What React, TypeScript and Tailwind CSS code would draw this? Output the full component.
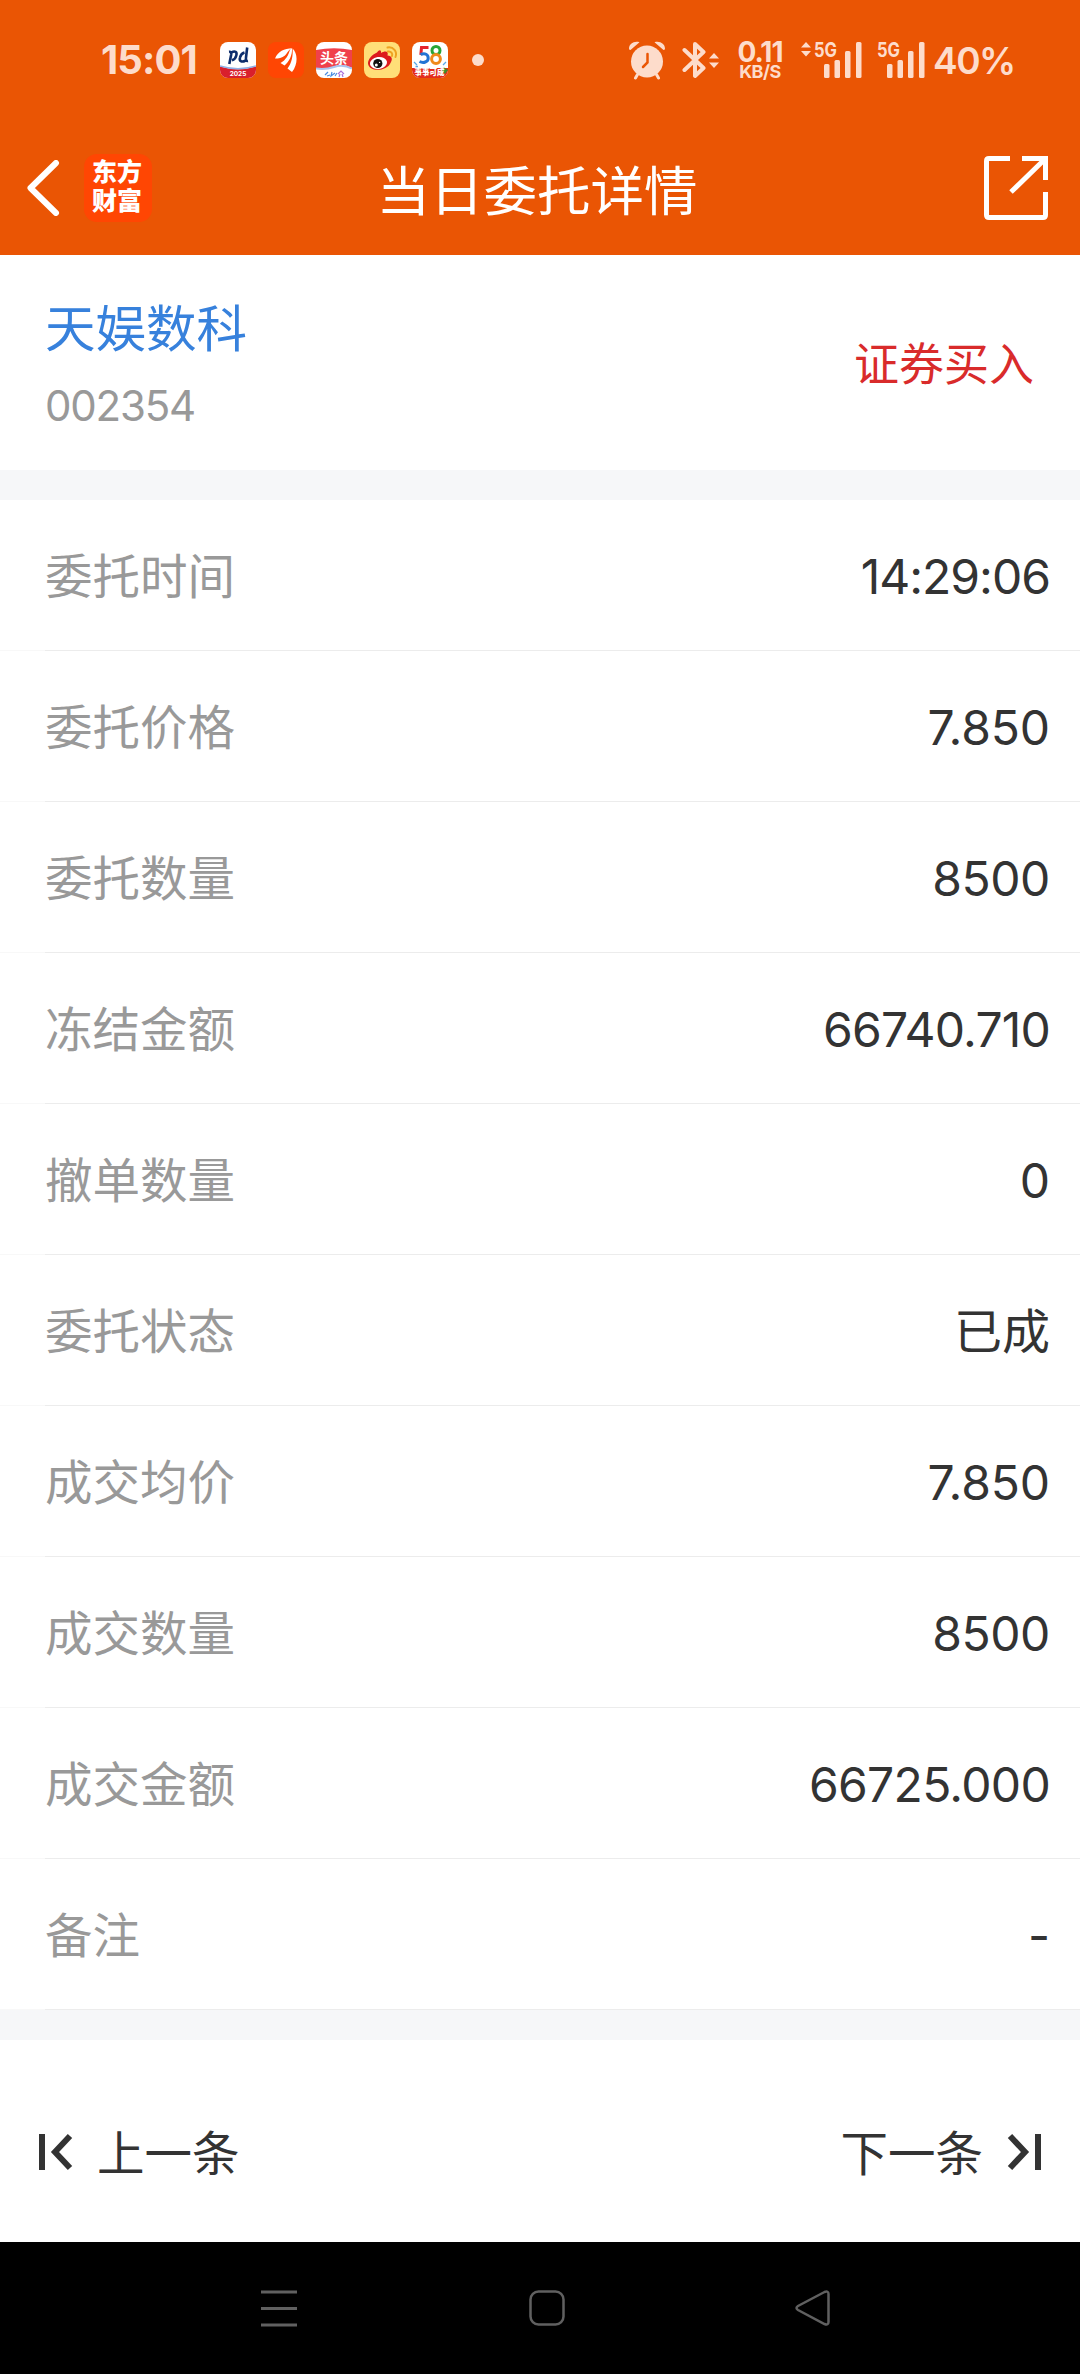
import React from 'react';

const rows = [
    { label: '委托时间', value: '14:29:06', cls: 'tracking-[-1px]' },
    { label: '委托价格', value: '7.850', cls: 'tracking-[-0.1px]' },
    { label: '委托数量', value: '8500', cls: 'tracking-[-0.4px]' },
    { label: '冻结金额', value: '66740.710', cls: 'tracking-[-0.8px]' },
    { label: '撤单数量', value: '0', cls: '' },
    { label: '委托状态', value: '已成', cls: 'text-[46.500px]' },
    { label: '成交均价', value: '7.850', cls: 'tracking-[-0.1px]' },
    { label: '成交数量', value: '8500', cls: 'tracking-[-0.4px]' },
    { label: '成交金额', value: '66725.000', cls: 'tracking-[-0.7px]' },
    { label: '备注', value: '-', cls: 'text-[42px]' },
];

const PufaIcon = () => (
    <svg className="ml-[26px] shrink-0" width="36" height="36" viewBox="0 0 36 36">
        <rect width="36" height="36" rx="8" fill="#fff" />
        <path d="M0 24.500Q18 30 36 24.500V28a8 8 0 0 1-8 8H8a8 8 0 0 1-8-8Z" fill="#d91f2c" />
        <path d="M0 24Q18 29.500 36 24" fill="none" stroke="#8fb0e6" strokeWidth="1.400" />
        <path d="M9.300 22L11.200 12.500Q11.500 9.500 9 9.800M11.500 10.500C15 8.500 17.300 10 16.300 13.500Q15.300 17.500 12 18.300M27.200 5.500L26 15.500Q25.500 19.500 28 19M25.500 18.500C21.500 20.800 19 19 20 15.500Q21 11.500 24.500 10.500" fill="none" stroke="#0d2d6c" strokeWidth="2.600" />
        <text x="18" y="33.500" textAnchor="middle" fontSize="6.500" fontWeight="700" fontFamily="Inter, sans-serif" fill="#fff">2025</text>
    </svg>
);

const EastmoneyIcon = () => (
    <svg className="ml-[12px] shrink-0" width="36" height="36" viewBox="0 0 36 36">
        <rect width="36" height="36" rx="8" fill="#ff4603" />
        <path d="M7 16.500C10 9.500 16 6.500 24.500 6.300C20 8 20.500 10 17 13.500C14 16 10.500 16.500 7 16.500Z" fill="#fff" />
        <path d="M12.500 21C18 18 20.500 13 22 7.500L24 6.500C24.500 13 21 20 16.500 23.500Z" fill="#fff" />
        <path d="M19.500 26.500C24 20.500 25 14 24.600 6.500C29.500 11 30.500 22 24 30Z" fill="#fff" />
    </svg>
);

const ToutiaoIcon = () => (
    <svg className="ml-[12px] shrink-0" width="36" height="36" viewBox="0 0 36 36">
        <rect width="36" height="36" rx="8" fill="#fff" />
        <path d="M0 8Q18 4.500 36 8V26Q27 21 18 24.500T0 26Z" fill="#f0414b" />
        <path d="M0 26.500Q9 28 18 25T36 26.500" fill="none" stroke="#a9c4ee" strokeWidth="2" />
        <text x="18" y="21" textAnchor="middle" fontSize="14" fontWeight="700" fontFamily="'Noto Sans CJK SC', sans-serif" fill="#fff">头条</text>
        <path d="M9 33l3-3m-1 4 3-1m2-3-1 4 4-3m0 3 2-3" fill="none" stroke="#4a8ce0" strokeWidth="1.200" />
        <path d="M22 32l3-3 3 3m-4 0-1 3m3-3 1 3" fill="none" stroke="#ab72d8" strokeWidth="1.200" />
    </svg>
);

const WeiboIcon = () => (
    <svg className="ml-[12px] shrink-0" width="36" height="36" viewBox="0 0 36 36">
        <rect width="36" height="36" rx="8" fill="#ffdf78" />
        <path d="M13 10.500C15.500 7 17.500 8 17 11C21 8.500 25 9 23.500 13.500C28 14 29 17 26.500 21C23 29.500 5 30.500 4 21.500C3.800 17.500 8 12.500 13 10.500Z" fill="#dd1a1e" />
        <ellipse cx="14.500" cy="21" rx="8.600" ry="6" fill="#fff" transform="rotate(-8 14.500 21)" />
        <circle cx="13.800" cy="21.500" r="4.600" fill="#111" />
        <circle cx="12.300" cy="23" r="1.500" fill="#fff" />
        <circle cx="15.600" cy="20.400" r=".7" fill="#fff" />
        <path d="M23.500 5.500C29.500 4.500 33.500 9.500 31.500 15M24 9.500C27 9 29 11.500 28 14" fill="none" stroke="#eea321" strokeWidth="2" strokeLinecap="round" />
    </svg>
);

const TongchengIcon = () => (
    <svg className="ml-[12px] shrink-0" width="36" height="36" viewBox="0 0 36 36">
        <rect width="36" height="36" rx="8" fill="#fff" />
        <path d="M0 26h36V28a8 8 0 0 1-8 8H8a8 8 0 0 1-8-8Z" fill="#e32d1c" />
        <path d="M16.500 5.500H9.500L8.800 13" fill="none" stroke="#e4232b" strokeWidth="3" />
        <path d="M8.500 12.500C13 10.500 16.200 12.500 16.200 16.200S11.500 21.500 7.500 19.500" fill="none" stroke="#2274d4" strokeWidth="3" />
        <circle cx="24" cy="8.500" r="4" fill="none" stroke="#29a538" strokeWidth="3" />
        <circle cx="24" cy="17" r="4.400" fill="none" stroke="#f08a1b" strokeWidth="3" />
        <path d="M2 20l3 3M3.500 24.500h2.500M34 20l-3 3" stroke="#5aa9e8" strokeWidth="1.300" />
        <path d="M29 28l3-2.500 4 2.500-3 4Z" fill="#3d8e2b" />
        <text x="17.500" y="33.300" textAnchor="middle" fontSize="7.500" fontWeight="900" fontFamily="'Noto Sans CJK SC', sans-serif" fill="#fff">事事可成</text>
    </svg>
);

const AlarmIcon = () => (
    <svg className="shrink-0" width="38" height="40" viewBox="0 0 38 40" fill="#fddccb">
        <path d="M1 8.500C1 4 6 .5 11.500 2.200L2.500 10Q1 10 1 8.500ZM37 8.500C37 4 32 .5 26.500 2.200L35.500 10Q37 10 37 8.500Z" />
        <circle cx="19" cy="21.500" r="16" />
        <path d="M9.500 34.500L7.500 38M28.500 34.500L30.500 38" stroke="#fddccb" strokeWidth="3" strokeLinecap="round" />
        <path d="M19.500 14v8.500L15 27" fill="none" stroke="#ea5504" strokeWidth="2.500" strokeLinecap="round" />
    </svg>
);

const BluetoothIcon = () => (
    <svg className="ml-[16px] shrink-0" width="38" height="40" viewBox="0 0 38 40">
        <path d="M2.500 10L21.500 28 13 36V4L21.500 12 2.500 30" fill="none" stroke="#fddccb" strokeWidth="4" strokeLinejoin="round" strokeLinecap="round" />
        <path d="M27 18.500L32 13l5 5.500ZM27 22.500L32 28l5-5.500Z" fill="#fddccb" />
    </svg>
);

// 5G label over four rising bars
const Signal = ({ arrows }: { arrows?: boolean }) => (
    <svg className={arrows ? 'ml-[16px] shrink-0 overflow-visible' : 'ml-[15px] shrink-0 overflow-visible'} width={arrows ? 62 : 48} height="38" viewBox={arrows ? '-14 0 62 38' : '0 0 48 38'} fill="#fddccb">
        {arrows && <path d="M-13 6.500L-8 1l5 5.500ZM-13 10L-8 15.500l5-5.500Z" />}
        <text x="0" y="16" fontSize="20" fontWeight="700" fontFamily="Inter, sans-serif" textLength="23" lengthAdjust="spacingAndGlyphs">5G</text>
        <rect x="10" y="23" width="5.500" height="14" rx="1.500" />
        <rect x="20.500" y="19" width="5.500" height="18" rx="1.500" />
        <rect x="31" y="10" width="5.500" height="27" rx="1.500" />
        <rect x="42" y="1" width="5.500" height="36" rx="1.500" />
    </svg>
);

export default function App() {
    return (
        <div className="flex h-[2374px] w-[1080px] flex-col overflow-hidden bg-white font-['Inter','Noto_Sans_CJK_SC',sans-serif] text-[#333333]">
            <div className="h-[255px] bg-[#ea5504]">
                {/* Status bar */}
                <div className="flex h-[120px] items-center pl-[101px] text-[#fddccb]">
                    <span className="w-[93px] text-[40px] leading-none font-bold tracking-[-0.9px] whitespace-nowrap">15:01</span>
                    <PufaIcon />
                    <EastmoneyIcon />
                    <ToutiaoIcon />
                    <WeiboIcon />
                    <TongchengIcon />
                    <span className="ml-[24px] size-3 rounded-full bg-[#fddccb]" />
                    <div className="ml-[144px] flex items-center">
                        <AlarmIcon />
                        <BluetoothIcon />
                        <div className="ml-[16px] flex w-[48px] flex-col items-center whitespace-nowrap">
                            <span className="text-[28px] leading-[22px] font-bold tracking-[-1px]">0.11</span>
                            <span className="text-[18px] leading-[17px] font-bold tracking-[-0.5px]">KB/S</span>
                        </div>
                        <Signal arrows />
                        <Signal />
                        <span className="ml-[8px] text-[37px] leading-none font-semibold tracking-[-1.5px]">40%</span>
                    </div>
                </div>

                {/* Header */}
                <div className="flex h-[135px] items-center justify-between pr-[32px] pl-[26px] text-white">
                    <div className="flex w-[126px] items-center justify-between">
                        <svg width="34" height="56" viewBox="0 0 34 56" fill="none">
                            <path d="M30 3L4.500 28L30 53" stroke="#fff" strokeWidth="6" strokeLinecap="round" strokeLinejoin="round" />
                        </svg>
                        <div className="flex size-[68px] flex-col items-center rounded-[13px] bg-[#ff4603] pt-[2px] pr-[2px] font-['Noto_Sans_CJK_SC',sans-serif] text-[25px] leading-[29px] font-black">
                            <span>东方</span>
                            <span>财富</span>
                        </div>
                    </div>
                    <h1 className="mt-[8px] ml-[-62px] text-[53.500px] leading-none">当日委托详情</h1>
                    <svg width="64" height="64" viewBox="0 0 64 64" fill="none" stroke="#fff" strokeWidth="5">
                        <path d="M26 2.500H5Q2.500 2.500 2.500 5V59Q2.500 61.500 5 61.500H59Q61.500 61.500 61.500 59V36M38 2.500H61.500V24M60 4L27 36" />
                    </svg>
                </div>
            </div>

            {/* Stock */}
            <div className="flex h-[215px] items-center justify-between pt-[4px] pr-[46px] pl-[45px]">
                <div className="flex flex-col">
                    <span className="text-[50.500px] leading-[60px] text-[#3781dc]">天娱数科</span>
                    <span className="mt-[22px] text-[42px] leading-[50px] tracking-[-1.2px] text-[#999999]">002354</span>
                </div>
                <span className="text-[45px] leading-none text-[#d92b2b]">证券买入</span>
            </div>
            <div className="h-[30px] bg-[#f6f7f9]" />

            {/* Order fields */}
            <div className="flex flex-col">
                {rows.map(({ label, value, cls }) => (
                    <div key={label} className="flex h-[151px] flex-col">
                        <div className="flex flex-1 items-center justify-between pt-[4px] pr-[30px] pl-[45px]">
                            <span className="text-[47.500px] leading-none text-[#999999]">{label}</span>
                            <span className={`text-[48px] leading-none ${cls}`}>{value}</span>
                        </div>
                        <div className="h-px bg-[#f8f8f8] pl-[45px]">
                            <div className="h-px bg-[#ececec]" />
                        </div>
                    </div>
                ))}
            </div>
            <div className="h-[30px] bg-[#f6f7f9]" />

            {/* Pager */}
            <div className="flex flex-1 items-center justify-between pt-[22px] pr-[38px] pl-[38px] text-[47.500px] leading-none">
                <div className="flex items-center">
                    <svg width="36" height="38" viewBox="0 0 36 38" fill="none" stroke="#333" strokeWidth="6">
                        <path d="M4 1V37M32 3L17 19L32 35" />
                    </svg>
                    <span className="mt-[3px] ml-[23px]">上一条</span>
                </div>
                <div className="flex items-center">
                    <span className="mt-[3px] mr-[23px]">下一条</span>
                    <svg width="36" height="38" viewBox="0 0 36 38" fill="none" stroke="#333" strokeWidth="6">
                        <path d="M32 1V37M4 3L19 19L4 35" />
                    </svg>
                </div>
            </div>

            {/* System navigation */}
            <div className="flex h-[132px] items-center justify-between bg-black pr-[249px] pl-[260px]">
                <svg width="38" height="38" viewBox="0 0 38 38" stroke="#606060" strokeWidth="3">
                    <path d="M1 3H37M1 19.500H37M1 36H37" />
                </svg>
                <svg width="36" height="36" viewBox="0 0 36 36" fill="none" stroke="#606060" strokeWidth="2.500">
                    <rect x="1.500" y="1.500" width="33" height="33" rx="8" />
                </svg>
                <svg width="36" height="36" viewBox="0 0 36 36" fill="none" stroke="#606060" strokeWidth="2.500">
                    <path d="M29.500 2L3 16Q0 18 3 20L29.500 34Q33.500 35.500 33.500 32V4Q33.500 .5 29.500 2Z" />
                </svg>
            </div>
        </div>
    );
}
